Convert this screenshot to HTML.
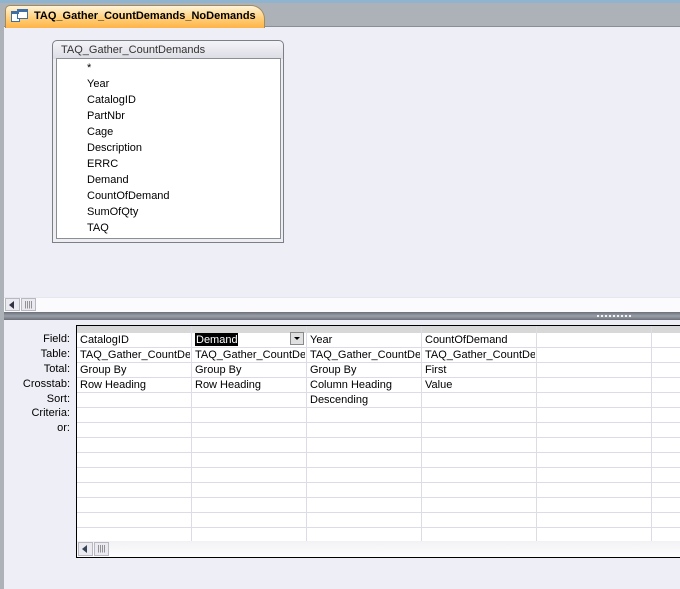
<!DOCTYPE html>
<html><head><style>
*{margin:0;padding:0;box-sizing:border-box}
body{width:680px;height:589px;background:#eeeef7;font-family:"Liberation Sans",sans-serif;font-size:11px;color:#000;position:relative;overflow:hidden}
.abs{position:absolute}
.t{position:absolute;white-space:nowrap;line-height:15px}
</style></head><body>
<div class="abs" style="left:0;top:0;width:680px;height:3px;background:#8fb4cf"></div>
<div class="abs" style="left:0;top:3px;width:680px;height:24px;background:#adb2b9;border-bottom:1px solid #8a8f96"></div>
<div class="abs" style="left:0;top:3px;width:4px;height:586px;background:#adb2b9"></div>
<div class="abs" style="left:5px;top:5px;width:260px;height:23px;background:linear-gradient(#fff3d8,#ffcf7a 55%,#ffb347);border:1px solid #a38a5c;border-bottom:none;border-radius:5px 14px 0 0"></div>
<svg class="abs" style="left:11px;top:9px" width="18" height="14"><rect x="0.5" y="2.5" width="8" height="10" fill="#fff" stroke="#3d6ea8"/><rect x="6.5" y="0.5" width="10" height="9" fill="#fff" stroke="#3d6ea8"/><rect x="7" y="1" width="9" height="2" fill="#3d6ea8"/><rect x="1" y="3" width="7" height="2" fill="#3d6ea8"/></svg>
<div class="t" style="left:34px;top:9px;font-weight:bold;font-size:11px">TAQ_Gather_CountDemands_NoDemands</div>
<div class="abs" style="left:4px;top:28px;width:676px;height:269px;background:#eeeef7"></div>
<div class="abs" style="left:52px;top:40px;width:232px;height:203px;border:1px solid #7a7f88;border-radius:5px 5px 0 0;background:linear-gradient(#f4f4f8,#dcdce4 18px,#eeeef2 18px)"></div>
<div class="t" style="left:61px;top:43px;color:#333">TAQ_Gather_CountDemands</div>
<div class="abs" style="left:56px;top:58px;width:225px;height:181px;background:#fff;border:1px solid #8a8f96"></div>
<div class="t" style="left:87px;top:61px">*</div>
<div class="t" style="left:87px;top:77px">Year</div>
<div class="t" style="left:87px;top:93px">CatalogID</div>
<div class="t" style="left:87px;top:109px">PartNbr</div>
<div class="t" style="left:87px;top:125px">Cage</div>
<div class="t" style="left:87px;top:141px">Description</div>
<div class="t" style="left:87px;top:157px">ERRC</div>
<div class="t" style="left:87px;top:173px">Demand</div>
<div class="t" style="left:87px;top:189px">CountOfDemand</div>
<div class="t" style="left:87px;top:205px">SumOfQty</div>
<div class="t" style="left:87px;top:221px">TAQ</div>
<div class="abs" style="left:4px;top:297px;width:676px;height:15px;background:#fbfbfd;border-top:1px solid #e6e6ee"></div>
<div class="abs" style="left:5px;top:298px;width:15px;height:13px;background:#eaeaf0;border:1px solid #b8b8c0"></div>
<div class="abs" style="left:9px;top:301px;width:0;height:0;border-top:4px solid transparent;border-bottom:4px solid transparent;border-right:5px solid #334"></div>
<div class="abs" style="left:21px;top:298px;width:15px;height:13px;background:#eaeaf0;border:1px solid #b8b8c0;font-size:8px;line-height:11px;text-align:center;color:#666">||||</div>
<div class="abs" style="left:4px;top:312px;width:676px;height:8px;background:linear-gradient(#6c6f78,#9aa0aa 50%,#6c6f78)"></div>
<div class="abs" style="left:597px;top:315px;width:35px;height:2px;background:repeating-linear-gradient(90deg,#f4f4f4 0 2px,transparent 2px 4px)"></div>
<div class="abs" style="left:4px;top:320px;width:676px;height:269px;background:#eeeef7"></div>
<div class="t" style="right:610px;top:332px;text-align:right">Field:</div>
<div class="t" style="right:610px;top:347px">Table:</div>
<div class="t" style="right:610px;top:362px">Total:</div>
<div class="t" style="right:610px;top:377px">Crosstab:</div>
<div class="t" style="right:610px;top:392px">Sort:</div>
<div class="t" style="right:610px;top:406px">Criteria:</div>
<div class="t" style="right:610px;top:421px">or:</div>
<div class="abs" style="left:76px;top:325px;width:605px;height:233px;border:1px solid #000;border-right:none;background:#fff;overflow:hidden">
 <div class="abs" style="left:0;top:0;width:605px;height:7px;background:#d8d8d8"></div>
 <div class="abs" style="left:0;top:7px;width:605px;height:208px;background:repeating-linear-gradient(#fff 0 14px,#dcdce6 14px 15px)"></div>
 <div class="abs" style="left:114px;top:0;width:1px;height:215px;background:#dcdce6"></div>
 <div class="abs" style="left:229px;top:0;width:1px;height:215px;background:#dcdce6"></div>
 <div class="abs" style="left:344px;top:0;width:1px;height:215px;background:#dcdce6"></div>
 <div class="abs" style="left:459px;top:0;width:1px;height:215px;background:#dcdce6"></div>
 <div class="abs" style="left:574px;top:0;width:1px;height:215px;background:#dcdce6"></div>
 <div class="abs" style="left:0;top:215px;width:605px;height:16px;background:linear-gradient(#f2f2f4,#fdfcfe)"></div>
 <div class="abs" style="left:1px;top:216px;width:15px;height:14px;background:#eaeaf0;border:1px solid #b8b8c0"></div>
 <div class="abs" style="left:5px;top:219px;width:0;height:0;border-top:4px solid transparent;border-bottom:4px solid transparent;border-right:5px solid #345"></div>
 <div class="abs" style="left:17px;top:216px;width:15px;height:14px;background:#eaeaf0;border:1px solid #b8b8c0;font-size:8px;line-height:12px;text-align:center;color:#666">||||</div>
</div>
<div class="t" style="left:80px;top:333px">CatalogID</div>
<div class="abs" style="left:195px;top:333px;width:43px;height:13px;background:#000"></div>
<div class="t" style="left:196px;top:333px;color:#fff">Demand</div>
<div class="abs" style="left:290px;top:332px;width:14px;height:13px;background:#e0e0e0;border:1px solid #888"></div>
<div class="abs" style="left:294px;top:337px;width:0;height:0;border-left:3px solid transparent;border-right:3px solid transparent;border-top:3px solid #000"></div>
<div class="t" style="left:310px;top:333px">Year</div>
<div class="t" style="left:425px;top:333px">CountOfDemand</div>
<div class="t" style="left:80px;top:348px;width:110px;overflow:hidden">TAQ_Gather_CountDemands</div>
<div class="t" style="left:195px;top:348px;width:110px;overflow:hidden">TAQ_Gather_CountDemands</div>
<div class="t" style="left:310px;top:348px;width:110px;overflow:hidden">TAQ_Gather_CountDemands</div>
<div class="t" style="left:425px;top:348px;width:110px;overflow:hidden">TAQ_Gather_CountDemands</div>
<div class="t" style="left:80px;top:363px">Group By</div>
<div class="t" style="left:195px;top:363px">Group By</div>
<div class="t" style="left:310px;top:363px">Group By</div>
<div class="t" style="left:425px;top:363px">First</div>
<div class="t" style="left:80px;top:378px">Row Heading</div>
<div class="t" style="left:195px;top:378px">Row Heading</div>
<div class="t" style="left:310px;top:378px">Column Heading</div>
<div class="t" style="left:425px;top:378px">Value</div>
<div class="t" style="left:310px;top:393px">Descending</div>
</body></html>
